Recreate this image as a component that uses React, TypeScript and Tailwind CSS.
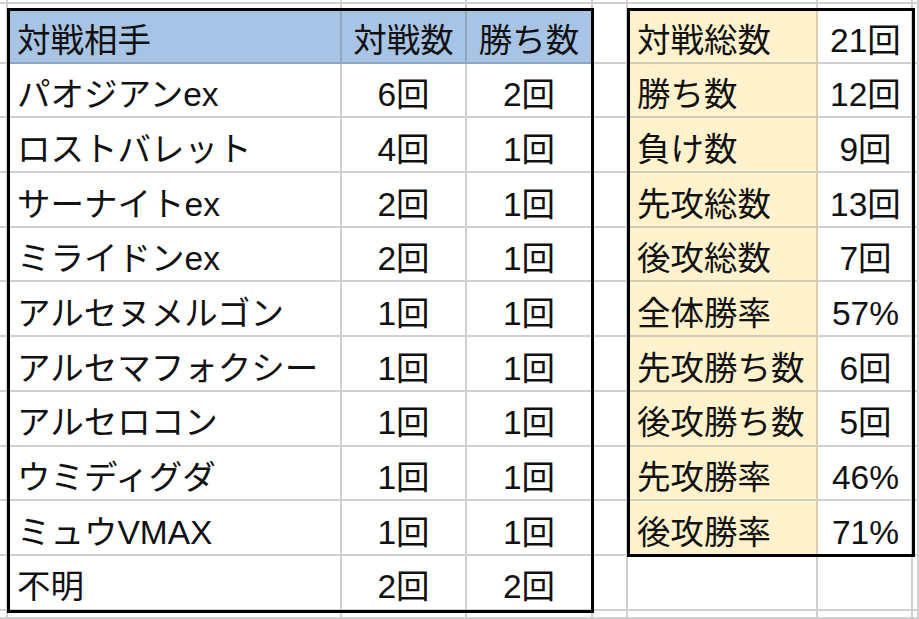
const opponents = [
  { name: '対戦相手', games: '対戦数', wins: '勝ち数', header: true },
  { name: 'パオジアンex', games: '6回', wins: '2回' },
  { name: 'ロストバレット', games: '4回', wins: '1回' },
  { name: 'サーナイトex', games: '2回', wins: '1回' },
  { name: 'ミライドンex', games: '2回', wins: '1回' },
  { name: 'アルセヌメルゴン', games: '1回', wins: '1回' },
  { name: 'アルセマフォクシー', games: '1回', wins: '1回' },
  { name: 'アルセロコン', games: '1回', wins: '1回' },
  { name: 'ウミディグダ', games: '1回', wins: '1回' },
  { name: 'ミュウVMAX', games: '1回', wins: '1回' },
  { name: '不明', games: '2回', wins: '2回' },
];

const summary = [
  ['対戦総数', '21回'],
  ['勝ち数', '12回'],
  ['負け数', '9回'],
  ['先攻総数', '13回'],
  ['後攻総数', '7回'],
  ['全体勝率', '57%'],
  ['先攻勝ち数', '6回'],
  ['後攻勝ち数', '5回'],
  ['先攻勝率', '46%'],
  ['後攻勝率', '71%'],
];

// 8 sheet columns, rows: 4px sliver, 5px gap, 11 data rows, rest
const COLS = 8;
const ROWS = 14;

function Cell({ row, col }: { row: number; col: number }) {
  const dataRow = row - 3; // 0 = header
  const inLeft = dataRow >= 0 && dataRow <= 10 && col >= 2 && col <= 4;
  const inRight = dataRow >= 0 && dataRow <= 9 && (col === 6 || col === 7);

  // thin band above the tables has no bottom line
  if (row === 2) {
    return <div className="border-r-2 border-[#d0d0d0]" />;
  }

  if (inLeft) {
    const item = opponents[dataRow];
    const text = col === 2 ? item.name : col === 3 ? item.games : item.wins;
    if (item.header) {
      return (
        <div
          className={`flex items-center pt-[10px] bg-[#a7c4e5] border-r-2 border-b-2 border-[#8ea6c2] ${
            col === 2 ? 'pl-[9px]' : 'justify-center'
          }`}
        >
          {text}
        </div>
      );
    }
    return (
      <div
        className={`flex items-center pt-[10px] border-r-2 border-b-2 border-[#d0d0d0] ${
          col === 2 ? 'pl-[9px]' : 'justify-center'
        }`}
      >
        {text}
      </div>
    );
  }

  if (inRight) {
    const [label, value] = summary[dataRow];
    if (col === 6) {
      return (
        <div className="flex items-center pt-[10px] pl-[9px] bg-[#fff2cc] border-r-2 border-r-[#d8cfae] border-b-2 border-b-[#d2ccb6]">
          {label}
        </div>
      );
    }
    return (
      <div className="flex items-center justify-center pt-[10px] pl-[2px] border-r-2 border-b-2 border-[#d0d0d0]">
        {value}
      </div>
    );
  }

  return <div className="border-r-2 border-b-2 border-[#d0d0d0]" />;
}

export default function App() {
  const cells = [];
  for (let r = 1; r <= ROWS; r++) {
    for (let c = 1; c <= COLS; c++) {
      cells.push(
        <div key={`${r}-${c}`} style={{ gridRow: r, gridColumn: c }} className="grid">
          <Cell row={r} col={c} />
        </div>
      );
    }
  }

  return (
    <div className="w-[919px] h-[619px] overflow-hidden bg-white text-[33.5px] leading-none text-[#111] font-['Liberation_Sans','Noto_Sans_CJK_JP',sans-serif]">
      <div className="grid h-full grid-cols-[8px_334px_125px_126px_35px_190px_95px_1fr] grid-rows-[4px_5px_repeat(11,54.7px)_1fr]">
        {cells}
        {/* black outlines around the two tables */}
        <div className="col-start-2 col-end-5 row-start-3 row-end-14 -mt-px -ml-px -mr-px -mb-[2px] border-[3px] border-black pointer-events-none z-10" />
        <div className="col-start-6 col-end-8 row-start-3 row-end-13 -mt-px -ml-px -mr-[2px] -mb-px border-[3px] border-black pointer-events-none z-10" />
      </div>
    </div>
  );
}
